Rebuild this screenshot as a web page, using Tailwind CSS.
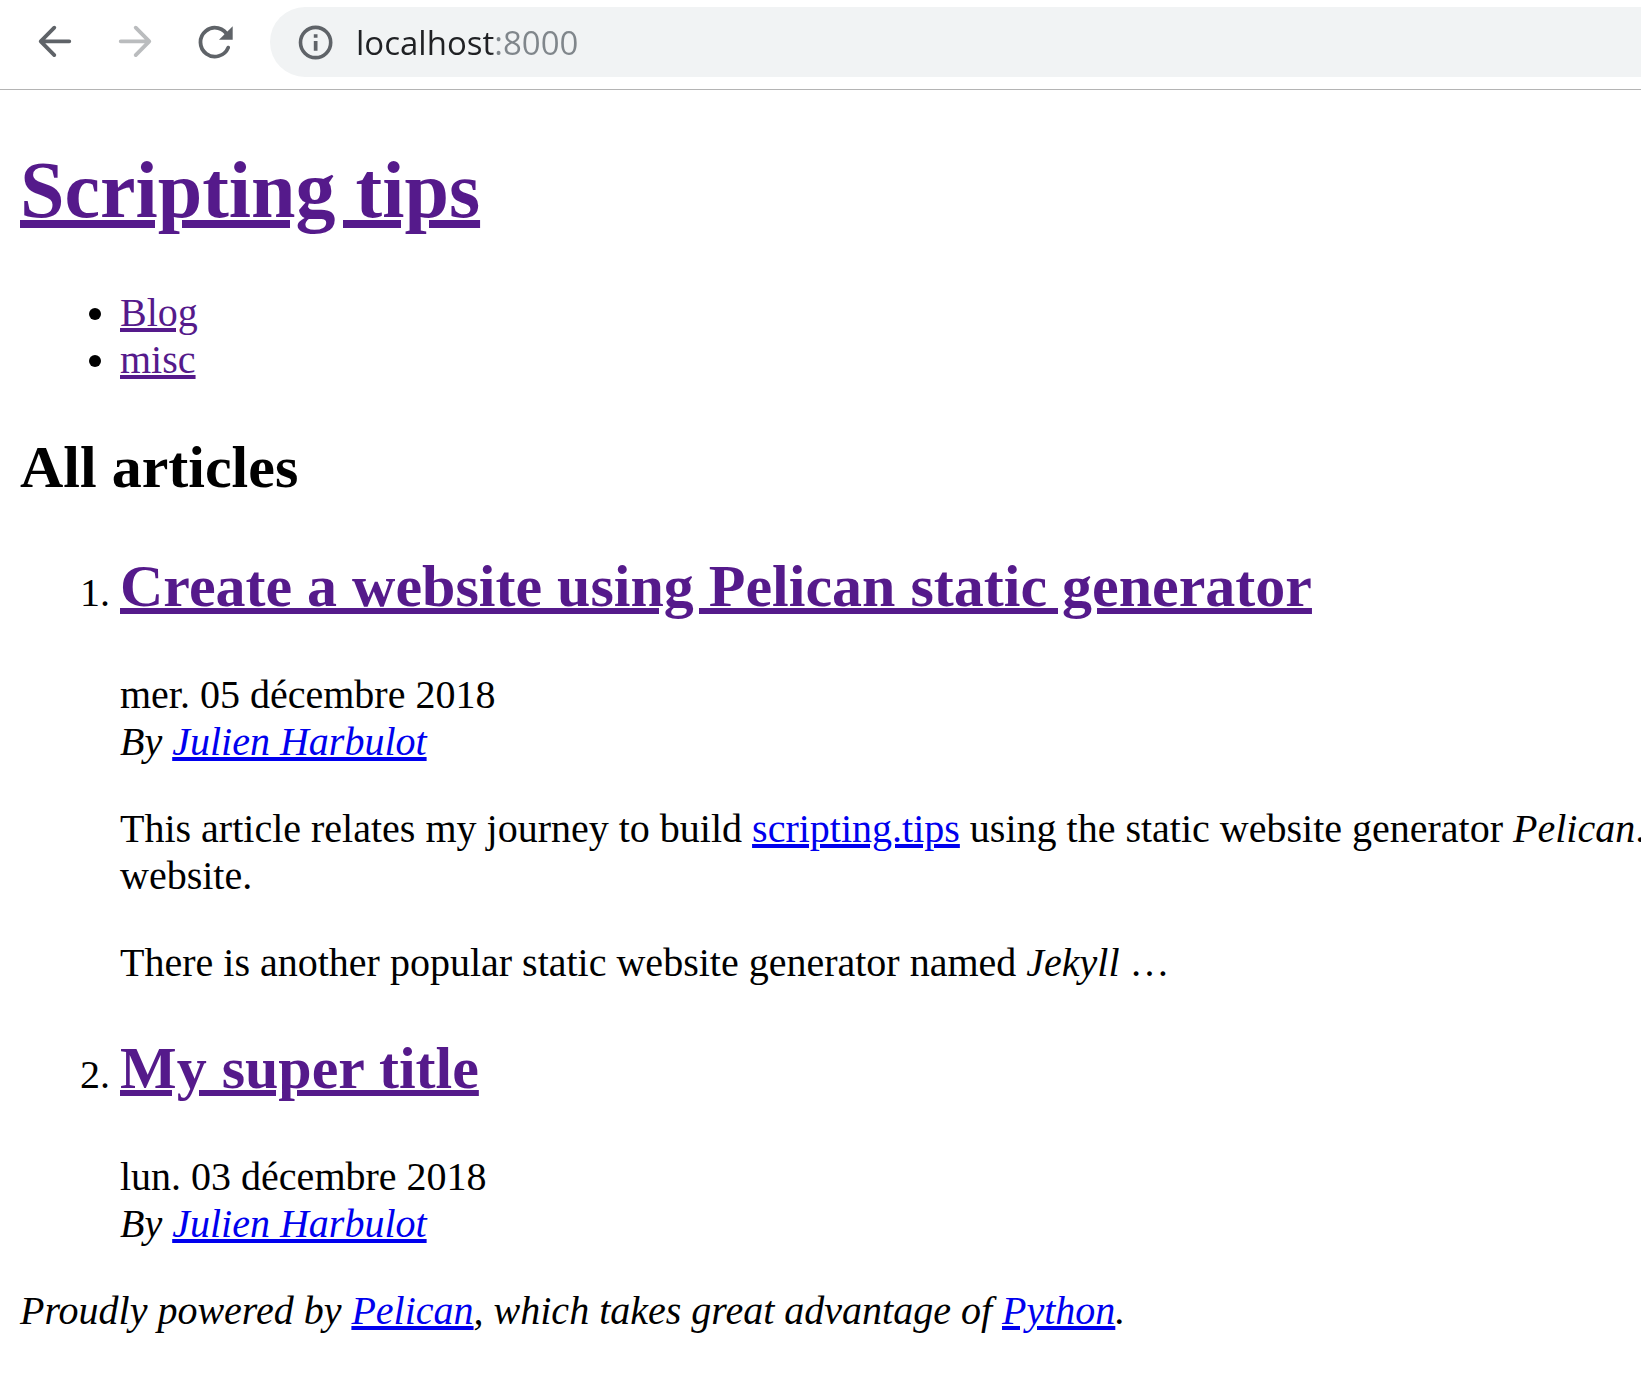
<!DOCTYPE html>
<html lang="fr">
<head>
<meta charset="utf-8">
<title>Scripting tips</title>
<script src="https://cdn.jsdelivr.net/npm/@tailwindcss/browser@4"></script>
</head>
<body class="bg-white text-black overflow-x-hidden">
<header class="flex items-center border-b border-[#b4b4b4] pt-[7px] pb-3 pl-[15px]">
  <nav class="flex shrink-0 mr-[15px]" aria-label="Navigation">
    <button type="button" aria-label="Back" class="flex h-[70px] w-20 items-center justify-center">
      <svg class="size-10" viewBox="0 0 40 40" fill="none" stroke="#5f6368" stroke-width="3.8" stroke-linecap="round" stroke-linejoin="round"><path d="M34.3 19.3H6.5M19.3 5.7 5.7 19.3l13.6 13.8"/></svg>
    </button>
    <button type="button" aria-label="Forward" disabled class="flex h-[70px] w-20 items-center justify-center">
      <svg class="size-10" viewBox="0 0 40 40" fill="none" stroke="#babcbe" stroke-width="3.8" stroke-linecap="round" stroke-linejoin="round"><path d="M5.7 19.3h27.8M20.7 5.7l13.6 13.6-13.6 13.8"/></svg>
    </button>
    <button type="button" aria-label="Reload" class="flex h-[70px] w-20 items-center justify-center">
      <svg class="size-10" viewBox="0 0 40 40" fill="none"><path d="M33.2 25.6A14.4 14.4 0 1 1 33 14.2" stroke="#5f6368" stroke-width="3.8" stroke-linecap="round"/><path d="M37.7 4.2v13.6H24z" fill="#5f6368"/></svg>
    </button>
  </nav>
  <div class="flex h-[70px] min-w-0 flex-1 items-center gap-5 rounded-l-full bg-[#f1f3f4] pl-[26px]">
    <svg class="size-10 shrink-0" viewBox="0 0 40 40" fill="none"><circle cx="19.6" cy="20.5" r="15.1" stroke="#5f6368" stroke-width="3.6"/><path d="M17.8 12.2h3.7v3.5h-3.7zM17.8 19h3.7v9.8h-3.7z" fill="#5f6368"/></svg>
    <input type="text" aria-label="Address" value="localhost:8000" class="h-[70px] min-w-0 flex-1 bg-[linear-gradient(90deg,#202124_138px,#80868b_138px)] bg-clip-text font-['Open_Sans',sans-serif] text-[33px] text-transparent outline-none">
  </div>
</header>

<main class="px-5 pt-[54px] font-['Liberation_Serif','Times_New_Roman',serif] text-[40px] leading-[47px]">
  <h1 class="text-[80px] leading-[92px] font-bold"><a href="#" class="text-[#551a8b] underline decoration-8 underline-offset-3">Scripting tips</a></h1>
  <ul class="mt-[53px] list-disc pl-[100px]">
    <li><a href="#" class="text-[#551a8b] underline decoration-4 underline-offset-2">Blog</a></li>
    <li><a href="#" class="text-[#551a8b] underline decoration-4 underline-offset-2">misc</a></li>
  </ul>

  <h2 class="mt-[50px] text-[60px] leading-[69px] font-bold">All articles</h2>
  <ol class="mt-[50px] flex list-decimal flex-col gap-12 pl-[100px]">
    <li>
      <h2 class="text-[60px] leading-[69px] font-bold"><a href="#" class="text-[#551a8b] underline decoration-6 underline-offset-2">Create a website using Pelican static generator</a></h2>
      <p class="mt-[50px]"><time datetime="2018-12-05">mer. 05 décembre 2018</time></p>
      <address>By <a href="#" class="text-[#0000ee] underline decoration-4 underline-offset-2">Julien Harbulot</a></address>
      <p class="mt-10 whitespace-nowrap">This article relates my journey to build <a href="#" class="text-[#0000ee] underline decoration-4 underline-offset-2">scripting.tips</a> using the static website generator <em>Pelican</em>.<br>website.</p>
      <p class="mt-10">There is another popular static website generator named <em>Jekyll</em> …</p>
    </li>
    <li>
      <h2 class="text-[60px] leading-[69px] font-bold"><a href="#" class="text-[#551a8b] underline decoration-6 underline-offset-2">My super title</a></h2>
      <p class="mt-[50px]"><time datetime="2018-12-03">lun. 03 décembre 2018</time></p>
      <address>By <a href="#" class="text-[#0000ee] underline decoration-4 underline-offset-2">Julien Harbulot</a></address>
    </li>
  </ol>

  <footer class="mt-10 italic">Proudly powered by <a href="#" class="text-[#0000ee] underline decoration-4 underline-offset-2">Pelican</a>, which takes great advantage of <a href="#" class="text-[#0000ee] underline decoration-4 underline-offset-2">Python</a>.</footer>
</main>
</body>
</html>
